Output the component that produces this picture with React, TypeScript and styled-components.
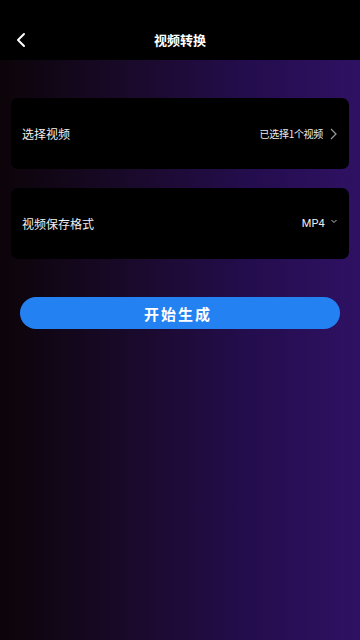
import React from 'react'
import styled, { createGlobalStyle } from 'styled-components'

const GlobalStyle = createGlobalStyle`
  html, body {
    margin: 0;
    padding: 0;
    background: #000;
  }
  * {
    box-sizing: border-box;
  }
  body {
    font-family: "Noto Sans CJK SC", "Noto Sans", sans-serif;
    color: #fff;
  }
`

const Screen = styled.div`
  width: 360px;
  height: 640px;
  display: flex;
  flex-direction: column;
  overflow: hidden;
`

const Header = styled.div`
  height: 60px;
  flex-shrink: 0;
  background: #000;
  display: grid;
  grid-template-columns: 44px 1fr 44px;
  align-items: center;
  padding-top: 20px;
`

const BackButton = styled.div`
  display: flex;
  align-items: center;
  justify-content: center;
  height: 40px;
  padding-right: 2px;
`

const Title = styled.div`
  text-align: center;
  font-size: 13px;
  font-weight: 700;
  line-height: 40px;
  color: #fff;
`

const Body = styled.div`
  flex: 1;
  background: linear-gradient(90deg, #0c0409 0%, #1b0a2e 40%, #240d4e 70%, #2f1163 100%);
  padding: 38px 11px 0;
  display: flex;
  flex-direction: column;
  gap: 19px;
`

const Card = styled.div`
  height: 71px;
  background: #000;
  border-radius: 7px;
  display: flex;
  align-items: center;
  justify-content: space-between;
  padding: 0 12px 0 11px;
`

const Label = styled.div`
  font-size: 12px;
  color: #f2f2f2;
`

const Value = styled.div<{ $gap: number }>`
  display: flex;
  align-items: center;
  gap: ${({ $gap }) => $gap}px;
`

const ValueText = styled.span<{ $size: number; $latin?: boolean }>`
  font-size: ${({ $size }) => $size}px;
  font-family: ${({ $latin }) => ($latin ? 'Roboto, "Noto Sans CJK SC", sans-serif' : '"Noto Sans CJK SC", sans-serif')};
  letter-spacing: ${({ $latin }) => ($latin ? '0.2px' : '-0.3px')};
  color: #ededed;
`

const GenerateButton = styled.button`
  margin: 19px 9px 0;
  height: 32px;
  border: none;
  border-radius: 16px;
  background: #2381f2;
  color: #fff;
  font-family: "Noto Sans CJK SC", sans-serif;
  font-size: 15px;
  font-weight: 700;
  letter-spacing: 2px;
  padding-left: 2px;
`

export default function App() {
  return (
    <Screen>
      <GlobalStyle />
      <Header>
        <BackButton>
          <svg width="10" height="16" viewBox="0 0 10 16">
            <path d="M8 2L2 8l6 6" stroke="#fff" strokeWidth="2" fill="none" strokeLinecap="round" strokeLinejoin="round" />
          </svg>
        </BackButton>
        <Title>视频转换</Title>
        <div />
      </Header>
      <Body>
        <Card>
          <Label>选择视频</Label>
          <Value $gap={7}>
            <ValueText $size={10}>已选择1个视频</ValueText>
            <svg width="7" height="12" viewBox="0 0 7 12">
              <path d="M1 1l5 5-5 5" stroke="#9a9a9a" strokeWidth="1.2" fill="none" />
            </svg>
          </Value>
        </Card>
        <Card>
          <Label>视频保存格式</Label>
          <Value $gap={6}>
            <ValueText $size={11} $latin>MP4</ValueText>
            <svg width="6" height="5" viewBox="0 0 6 5" style={{ marginTop: -4 }}>
              <path d="M0.5 1l2.5 2.5L5.5 1" stroke="#bbb" strokeWidth="1" fill="none" />
            </svg>
          </Value>
        </Card>
        <GenerateButton>开始生成</GenerateButton>
      </Body>
    </Screen>
  )
}
